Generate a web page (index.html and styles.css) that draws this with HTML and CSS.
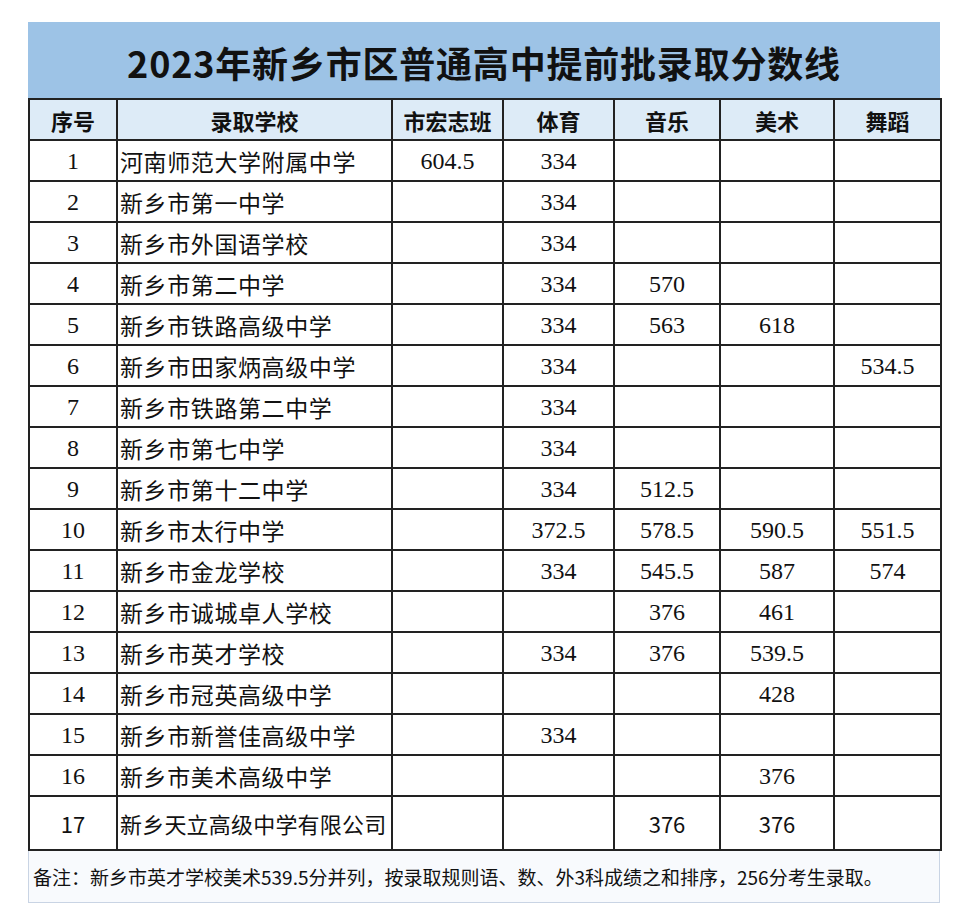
FILE: index.html
```html
<!DOCTYPE html>
<html lang="zh-CN">
<head>
<meta charset="utf-8">
<title>2023年新乡市区普通高中提前批录取分数线</title>
<link rel="stylesheet" href="styles.css">
</head>
<body>
<div class="sheet">
  <div class="title">2023年新乡市区普通高中提前批录取分数线</div>
  <table class="grid">
    <colgroup>
      <col class="c-no"><col class="c-school"><col class="c-a"><col class="c-b"><col class="c-c"><col class="c-d"><col class="c-e">
    </colgroup>
    <thead>
      <tr><th>序号</th><th>录取学校</th><th>市宏志班</th><th>体育</th><th>音乐</th><th>美术</th><th>舞蹈</th></tr>
    </thead>
    <tbody>
      <tr><td class="num">1</td><td class="name">河南师范大学附属中学</td><td class="num">604.5</td><td class="num">334</td><td></td><td></td><td></td></tr>
      <tr><td class="num">2</td><td class="name">新乡市第一中学</td><td></td><td class="num">334</td><td></td><td></td><td></td></tr>
      <tr><td class="num">3</td><td class="name">新乡市外国语学校</td><td></td><td class="num">334</td><td></td><td></td><td></td></tr>
      <tr><td class="num">4</td><td class="name">新乡市第二中学</td><td></td><td class="num">334</td><td class="num">570</td><td></td><td></td></tr>
      <tr><td class="num">5</td><td class="name">新乡市铁路高级中学</td><td></td><td class="num">334</td><td class="num">563</td><td class="num">618</td><td></td></tr>
      <tr><td class="num">6</td><td class="name">新乡市田家炳高级中学</td><td></td><td class="num">334</td><td></td><td></td><td class="num">534.5</td></tr>
      <tr><td class="num">7</td><td class="name">新乡市铁路第二中学</td><td></td><td class="num">334</td><td></td><td></td><td></td></tr>
      <tr><td class="num">8</td><td class="name">新乡市第七中学</td><td></td><td class="num">334</td><td></td><td></td><td></td></tr>
      <tr><td class="num">9</td><td class="name">新乡市第十二中学</td><td></td><td class="num">334</td><td class="num">512.5</td><td></td><td></td></tr>
      <tr><td class="num">10</td><td class="name">新乡市太行中学</td><td></td><td class="num">372.5</td><td class="num">578.5</td><td class="num">590.5</td><td class="num">551.5</td></tr>
      <tr><td class="num">11</td><td class="name">新乡市金龙学校</td><td></td><td class="num">334</td><td class="num">545.5</td><td class="num">587</td><td class="num">574</td></tr>
      <tr><td class="num">12</td><td class="name">新乡市诚城卓人学校</td><td></td><td></td><td class="num">376</td><td class="num">461</td><td></td></tr>
      <tr><td class="num">13</td><td class="name">新乡市英才学校</td><td></td><td class="num">334</td><td class="num">376</td><td class="num">539.5</td><td></td></tr>
      <tr><td class="num">14</td><td class="name">新乡市冠英高级中学</td><td></td><td></td><td></td><td class="num">428</td><td></td></tr>
      <tr><td class="num">15</td><td class="name">新乡市新誉佳高级中学</td><td></td><td class="num">334</td><td></td><td></td><td></td></tr>
      <tr><td class="num">16</td><td class="name">新乡市美术高级中学</td><td></td><td></td><td></td><td class="num">376</td><td></td></tr>
      <tr class="tall"><td class="num">17</td><td class="name">新乡天立高级中学有限公司</td><td></td><td></td><td class="num">376</td><td class="num">376</td><td></td></tr>
    </tbody>
  </table>
  <div class="note">备注：新乡市英才学校美术539.5分并列，按录取规则语、数、外3科成绩之和排序，256分考生录取。</div>
</div>
</body>
</html>
```
FILE: styles.css
```css
html, body {
  margin: 0;
  padding: 0;
  background: #ffffff;
}

body {
  font-family: "Noto Sans CJK SC", "Noto Sans", sans-serif;
  color: #000;
}

.sheet {
  width: 912px;
  margin: 22px 0 0 28px;
}

.title {
  height: 76px;
  background: #9dc3e6;
  display: flex;
  align-items: center;
  justify-content: center;
  font-size: 36px;
  font-weight: 700;
  letter-spacing: 0.8px;
  color: #111;
  padding-top: 4px;
  box-sizing: border-box;
}

.grid {
  width: 912px;
  border-collapse: collapse;
  table-layout: fixed;
}

.c-no { width: 88px; }
.c-school { width: 275px; }
.c-a { width: 111px; }
.c-b { width: 111px; }
.c-c { width: 106px; }
.c-d { width: 114px; }
.c-e { width: 107px; }

.grid th,
.grid td {
  border: 2px solid #222;
  height: 39px;
  padding: 0;
  text-align: center;
  vertical-align: middle;
  white-space: nowrap;
  overflow: hidden;
}

.grid th {
  background: #ddebf7;
  font-size: 22px;
  font-weight: 700;
  color: #111;
}

.grid td.name {
  text-align: left;
  padding-left: 2px;
  font-size: 23px;
  letter-spacing: 0.6px;
  color: #111;
}

.grid td.num {
  font-family: "Liberation Serif", "Times New Roman", serif;
  font-size: 24px;
  height: 37px;
  padding-top: 2px;
  color: #111;
}

.grid tr.tall td {
  height: 52px;
}

.grid tr.tall td.name {
  font-size: 22px;
  letter-spacing: 0.2px;
}

.grid tr.tall td.num {
  font-family: "Noto Sans CJK SC", "Noto Sans", sans-serif;
  font-size: 22px;
  height: 52px;
  padding-top: 0;
}

.note {
  height: 52px;
  box-sizing: border-box;
  border: 1px solid #c9d4e4;
  border-top: none;
  background: #f8fafd;
  display: flex;
  align-items: center;
  padding-left: 4px;
  font-size: 19px;
  color: #111;
}
```
